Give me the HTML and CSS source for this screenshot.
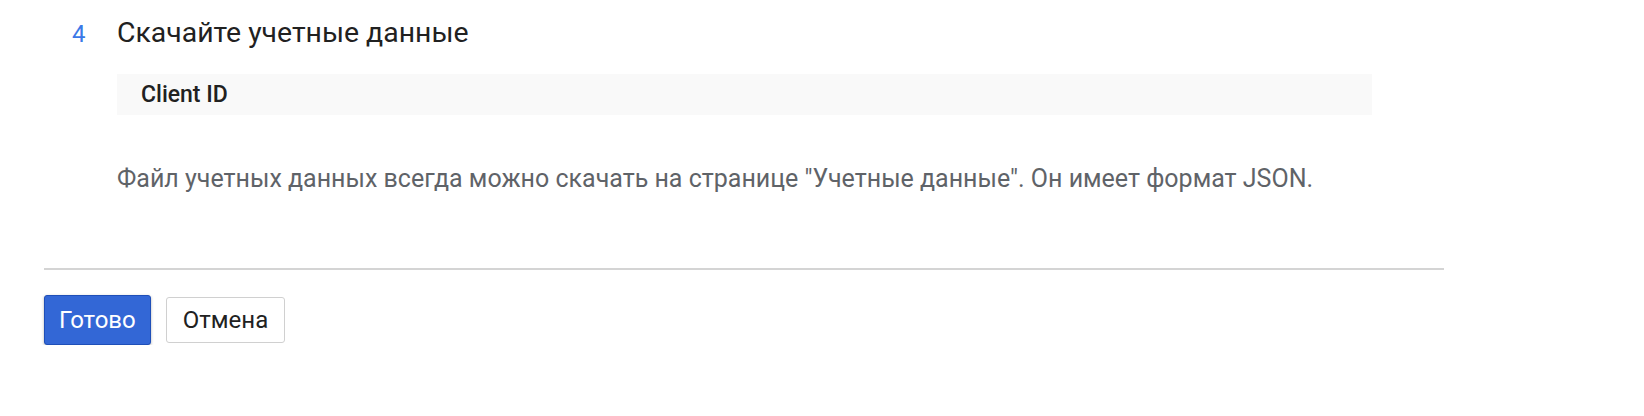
FILE: index.html
```html
<!DOCTYPE html>
<html lang="ru">
<head>
<meta charset="utf-8">
<link rel="stylesheet" href="styles.css">
</head>
<body>
<div class="page">
  <section class="step">
    <div class="step-head">
      <span class="step-num">4</span>
      <h2 class="step-title">Скачайте учетные данные</h2>
    </div>
    <div class="step-body">
      <div class="cred-box"><span class="cred-label">Client ID</span></div>
      <p class="note">Файл учетных данных всегда можно скачать на странице "Учетные данные". Он имеет формат JSON.</p>
    </div>
  </section>
  <hr class="divider">
  <div class="actions">
    <button class="btn btn-primary">Готово</button>
    <button class="btn btn-secondary">Отмена</button>
  </div>
</div>
</body>
</html>
```
FILE: styles.css
```css
html, body {
  margin: 0;
  padding: 0;
  background: #ffffff;
}
body {
  font-family: Roboto, "Noto Sans", Arial, sans-serif;
  color: #212121;
}
.page {
  width: 1400px;
  padding: 0 0 0 44px;
}
.step {
  padding-top: 15px;
}
.step-head {
  display: flex;
  align-items: baseline;
}
.step-num {
  width: 73px;
  padding-left: 28px;
  box-sizing: border-box;
  font-size: 24px;
  line-height: 36px;
  color: #3b78e7;
}
.step-title {
  margin: 0;
  font-size: 28.4px;
  font-weight: 400;
  color: #212121;
  line-height: 36px;
}
.step-body {
  padding-left: 73px;
}
.cred-box {
  margin-top: 22px;
  width: 1255px;
  height: 41px;
  background: #f9f9f9;
  display: flex;
  align-items: center;
  padding-left: 24px;
  box-sizing: border-box;
}
.cred-label {
  font-size: 23px;
  font-weight: 500;
  color: #212121;
}
.note {
  margin: 48px 0 0 0;
  font-size: 25px;
  line-height: 32px;
  color: #5f6368;
}
.divider {
  margin: 73px 0 0 0;
  width: 1400px;
  border: 0;
  height: 2px;
  background: #d4d4d4;
}
.actions {
  display: flex;
  align-items: center;
  gap: 15px;
  margin-top: 25px;
}
.btn {
  font-family: Roboto, "Noto Sans", Arial, sans-serif;
  font-size: 24px;
  border-radius: 3px;
  cursor: pointer;
}
.btn-primary {
  height: 50px;
  padding: 0 14px;
  background: #3367d6;
  border: 1px solid #1f4fb8;
  color: #ffffff;
  box-shadow: 0 1px 3px rgba(0,0,0,0.3);
}
.btn-secondary {
  height: 46px;
  padding: 0 16px;
  background: #ffffff;
  border: 1px solid #d0d0d0;
  color: #212121;
}
```
